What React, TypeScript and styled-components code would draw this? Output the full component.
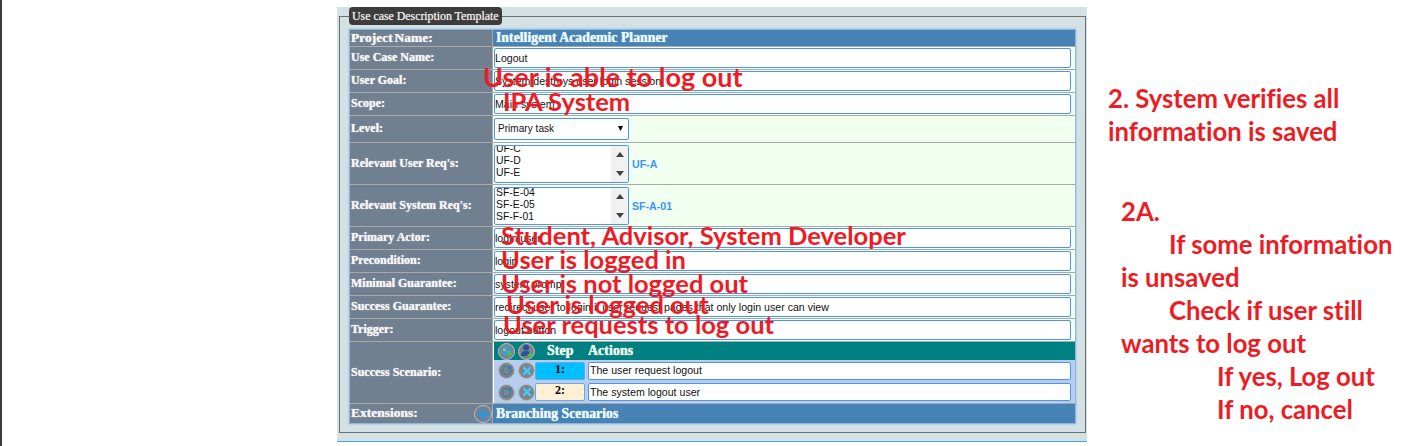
import React from 'react';
import styled, { createGlobalStyle } from 'styled-components';
import { Plus, X, RotateCw } from 'lucide-react';

const GlobalStyle = createGlobalStyle`
  html, body {
    margin: 0;
    padding: 0;
    background: #fff;
  }
`;

const Page = styled.div`
  display: flex;
  width: 1415px;
  height: 446px;
  overflow: hidden;
  background: #fff;
`;

const LeftEdge = styled.div`
  width: 2px;
  flex-shrink: 0;
  background: #3a3a3a;
  margin-right: 335px;
`;

const Panel = styled.div`
  width: 750px;
  height: 435px;
  box-sizing: border-box;
  flex-shrink: 0;
  margin-top: 7px;
  padding: 0 1px 0 2px;
  background: #d3e1e4;
  border-bottom: 1px solid #4aa3d8;
`;

const Fieldset = styled.fieldset`
  margin: 0;
  padding: 0 9px 9px 9px;
  height: 426px;
  box-sizing: border-box;
  border: 1px solid #6a6f70;
  min-width: 0;
`;

const Legend = styled.legend`
  padding: 0 3px;
  height: 18px;
  line-height: 18px;
  box-sizing: border-box;
  background: #3c3c3c;
  border-radius: 4px;
  color: #f0f0f0;
  font: 12px/18px 'Liberation Serif', serif;
  letter-spacing: -0.07px;
  text-shadow: 0 0 1px #bbb;
`;

const TableWrap = styled.div`
  position: relative;
  margin-top: 4px;
  width: 727px;
  box-sizing: border-box;
  border: 1px solid #8fb6e0;
  box-shadow: 0 0 2px #8fb6e0;
  background: #a9a9a9;
  display: flex;
  flex-direction: column;
  gap: 1px;
`;

const Row = styled.div<{ $h: number }>`
  display: flex;
  height: ${p => p.$h}px;
  gap: 1px;
`;

const Label = styled.div<{ $big?: boolean; $lift?: boolean }>`
  position: relative;
  width: 142px;
  flex-shrink: 0;
  box-sizing: border-box;
  padding-left: 1px;
  padding-bottom: ${p => (p.$lift ? 2 : 0)}px;
  display: flex;
  align-items: center;
  background: #708090;
  color: #f5f5f5;
  font: bold ${p => (p.$big ? 13.5 : 12)}px 'Liberation Serif', serif;
  word-spacing: ${p => (p.$big ? -1.5 : 0)}px;
  text-shadow: 0 0 1px #fff;
  white-space: nowrap;
`;

const Value = styled.div`
  flex: 1;
  min-width: 0;
  display: flex;
  align-items: center;
  gap: 3px;
  padding: 0 4px 0 1px;
  background: #f0fff0;
`;

const Banner = styled.div`
  flex: 1;
  display: flex;
  align-items: center;
  padding-left: 3px;
  background: #4682b4;
  color: #e8fbff;
  font: bold 13.8px 'Liberation Serif', serif;
  text-shadow: 0 0 1px #fff;
`;

const TextBox = styled.input`
  flex: 1;
  min-width: 0;
  height: 20px;
  box-sizing: border-box;
  padding: 0 0 1px 0;
  background: #fff;
  border: 1px solid #4d94f0;
  border-radius: 2px;
  outline: none;
  color: #111;
  font: 10.6px 'Liberation Sans', sans-serif;
`;

const SelectBox = styled.div`
  width: 135px;
  height: 22px;
  box-sizing: border-box;
  padding: 0 5px 1px 3px;
  display: flex;
  align-items: center;
  justify-content: space-between;
  background: #fff;
  border: 1px solid #4d94f0;
  border-radius: 2px;
  color: #111;
  font: 10px 'Liberation Sans', sans-serif;
  letter-spacing: 0.05px;
`;

const ListBox = styled.div`
  width: 135px;
  height: 38px;
  box-sizing: border-box;
  display: flex;
  overflow: hidden;
  background: #fff;
  border: 1px solid #4d94f0;
  border-radius: 2px;
`;

const Options = styled.div<{ $shift: number }>`
  flex: 1;
  margin-top: ${p => p.$shift}px;
  padding-left: 1px;
  color: #111;
  font: 10.4px/12.4px 'Liberation Sans', sans-serif;
`;

const ScrollBar = styled.div`
  width: 17px;
  flex-shrink: 0;
  display: flex;
  flex-direction: column;
  align-items: center;
  justify-content: space-between;
  padding: 6px 0;
  box-sizing: border-box;
  background: #f1f1f1;
`;

const Picked = styled.span`
  color: #3d94f6;
  font: bold 10.6px 'Liberation Sans', sans-serif;
`;

const ScenarioCell = styled.div`
  flex: 1;
  min-width: 0;
  display: flex;
  flex-direction: column;
  padding: 0 4px 0 1px;
  background: #f0fff0;
`;

const ScenarioHead = styled.div`
  display: flex;
  align-items: center;
  height: 18px;
  padding-left: 4px;
  gap: 3px;
  margin-right: -4px;
  background: #008080;
  color: #f0fff0;
  font: bold 14px 'Liberation Serif', serif;
  text-shadow: 0 0 1px #fff;
`;

const HeadStep = styled.span`
  margin-left: 9px;
  width: 38px;
`;

const ScenarioBody = styled.div`
  flex: 1;
  display: flex;
  flex-direction: column;
  margin-right: -4px;
  padding: 0 4px;
  background: #b7cdf0;
`;

const StepRow = styled.div`
  display: flex;
  align-items: center;
  flex: 1;
  gap: 3px;
`;

const StepBox = styled.div<{ $active?: boolean }>`
  width: 50px;
  height: 18px;
  margin-left: -3px;
  box-sizing: border-box;
  text-align: center;
  background: ${p => (p.$active ? '#00bfff' : '#ffefd5')};
  border: 1px solid #6ea6ee;
  border-radius: 2px;
  color: #000;
  font: bold 12px/12px 'Liberation Serif', serif;
`;

const ActionBox = styled(TextBox)`
  height: 18px;
  padding: 0 0 1px 1px;
`;

const RoundButton = styled.span`
  width: 17px;
  height: 17px;
  flex-shrink: 0;
  box-sizing: border-box;
  display: inline-flex;
  align-items: center;
  justify-content: center;
  background: #808488;
  border: 1.5px solid #bdbdbd;
  border-radius: 50%;
`;

const AddBranch = styled(RoundButton)`
  position: absolute;
  right: 0;
  top: 1px;
  width: 18px;
  height: 18px;
  background: #6f8296;
`;

const Overlay = styled.div<{ $x: number; $y: number; $size: number }>`
  position: absolute;
  left: ${p => p.$x}px;
  top: ${p => p.$y}px;
  color: #ed1c24;
  font: bold ${p => p.$size}px/30px Lato, sans-serif;
  font-variant-ligatures: none;
  white-space: nowrap;
  pointer-events: none;
`;

const Notes = styled.div`
  margin-left: 21px;
  padding-top: 82px;
  color: #ed1c24;
  font: bold 25.7px/33px Lato, sans-serif;
  font-variant-ligatures: none;
  white-space: nowrap;
`;

const Note = styled.div<{ $indent?: number; $gap?: number }>`
  margin-left: ${p => p.$indent ?? 0}px;
  margin-top: ${p => p.$gap ?? 0}px;
`;

const Arrow = ({ up, size = 8, color = '#444' }: { up?: boolean; size?: number; color?: string }) => (
  <svg width={size} height={5} viewBox="0 0 8 5" preserveAspectRatio="none">
    <path d={up ? 'M4 0L8 5H0Z' : 'M0 0H8L4 5Z'} fill={color} />
  </svg>
);

const GlobeAdd = () => (
  <svg width={13} height={13} viewBox="0 0 13 13">
    <circle cx="6" cy="6" r="5" fill="#3f9bd8" />
    <path d="M3 3.5c2-1 3 0 3 1.5S4 7 3 6zM7 7c2-1 3 0 3 1" fill="#8cc06a" />
    <path d="M9.5 6.5v5M7 9h5" stroke="#43c243" strokeWidth="2" />
  </svg>
);

const UserAdd = () => (
  <svg width={13} height={14} viewBox="0 0 13 14">
    <circle cx="6" cy="3.5" r="3" fill="#24509c" />
    <path d="M1 12c0-4 2-5 5-5s5 1 5 5z" fill="#24509c" />
    <path d="M10 8.5v5M7.5 11h5" stroke="#43c243" strokeWidth="2" />
  </svg>
);

const rows = [
  { label: 'Use Case Name:', value: 'Logout' },
  { label: 'User Goal:', value: 'System destroys user login session' },
  { label: 'Scope:', value: 'Main system' },
];

const lowerRows = [
  { label: 'Primary Actor:', value: 'login user' },
  { label: 'Precondition:', value: 'login' },
  { label: 'Minimal Guarantee:', value: 'system prompt' },
  {
    label: 'Success Guarantee:',
    value: 'redirect user to login if user request pages that only login user can view',
  },
  { label: 'Trigger:', value: 'logout button' },
];

const steps = [
  { n: '1:', text: 'The user request logout', active: true },
  { n: '2:', text: 'The system logout user', active: false },
];

const overlays = [
  { x: 133, y: 32, size: 27, text: 'User is able to log out' },
  { x: 153, y: 56, size: 25.5, text: 'IPA System' },
  { x: 151, y: 190, size: 25.5, text: 'Student, Advisor, System Developer' },
  { x: 151, y: 214, size: 25.5, text: 'User is logged in' },
  { x: 151, y: 238, size: 25.5, text: 'User is not logged out' },
  { x: 156, y: 259, size: 25.5, text: 'User is logged out' },
  { x: 153, y: 279, size: 25.5, text: 'User requests to log out' },
];

const Field = ({ label, value }: { label: string; value: string }) => (
  <Row $h={22}>
    <Label $lift>{label}</Label>
    <Value>
      <TextBox readOnly value={value} />
    </Value>
  </Row>
);

const App: React.FC = () => {
  return (
    <Page>
      <GlobalStyle />
      <LeftEdge />
      <Panel>
        <Fieldset>
          <Legend>Use case Description Template</Legend>
          <TableWrap>
            <Row $h={16}>
              <Label $big>Project Name:</Label>
              <Banner>Intelligent Academic Planner</Banner>
            </Row>
            {rows.map(r => (
              <Field key={r.label} {...r} />
            ))}
            <Row $h={26}>
              <Label $lift>Level:</Label>
              <Value>
                <SelectBox>
                  Primary task
                  <Arrow size={5} color="#000" />
                </SelectBox>
              </Value>
            </Row>
            <Row $h={41}>
              <Label>Relevant User Req's:</Label>
              <Value>
                <ListBox>
                  <Options $shift={-3}>
                    <div>UF-C</div>
                    <div>UF-D</div>
                    <div>UF-E</div>
                  </Options>
                  <ScrollBar>
                    <Arrow up />
                    <Arrow />
                  </ScrollBar>
                </ListBox>
                <Picked>UF-A</Picked>
              </Value>
            </Row>
            <Row $h={41}>
              <Label>Relevant System Req's:</Label>
              <Value>
                <ListBox>
                  <Options $shift={-1}>
                    <div>SF-E-04</div>
                    <div>SF-E-05</div>
                    <div>SF-F-01</div>
                  </Options>
                  <ScrollBar>
                    <Arrow up />
                    <Arrow />
                  </ScrollBar>
                </ListBox>
                <Picked>SF-A-01</Picked>
              </Value>
            </Row>
            {lowerRows.map(r => (
              <Field key={r.label} {...r} />
            ))}
            <Row $h={61}>
              <Label>Success Scenario:</Label>
              <ScenarioCell>
                <ScenarioHead>
                  <RoundButton>
                    <GlobeAdd />
                  </RoundButton>
                  <RoundButton>
                    <UserAdd />
                  </RoundButton>
                  <HeadStep>Step</HeadStep>
                  <span>Actions</span>
                </ScenarioHead>
                <ScenarioBody>
                  {steps.map(s => (
                    <StepRow key={s.n}>
                      <RoundButton>
                        <RotateCw size={11} color="#2f7fb8" strokeWidth={3} />
                      </RoundButton>
                      <RoundButton>
                        <X size={12} color="#45c4f7" strokeWidth={5} />
                      </RoundButton>
                      <StepBox $active={s.active}>{s.n}</StepBox>
                      <ActionBox readOnly value={s.text} />
                    </StepRow>
                  ))}
                </ScenarioBody>
              </ScenarioCell>
            </Row>
            <Row $h={19}>
              <Label $big $lift>
                Extensions:
                <AddBranch>
                  <Plus size={15} color="#1e9bf0" strokeWidth={3.5} />
                </AddBranch>
              </Label>
              <Banner>Branching Scenarios</Banner>
            </Row>
            {overlays.map(o => (
              <Overlay key={o.text} $x={o.x} $y={o.y} $size={o.size}>
                {o.text}
              </Overlay>
            ))}
          </TableWrap>
        </Fieldset>
      </Panel>
      <Notes>
        <Note>2. System verifies all</Note>
        <Note>information is saved</Note>
        <Note $indent={13} $gap={47}>2A.</Note>
        <Note $indent={61}>If some information</Note>
        <Note $indent={13}>is unsaved</Note>
        <Note $indent={61}>Check if user still</Note>
        <Note $indent={13}>wants to log out</Note>
        <Note $indent={109}>If yes, Log out</Note>
        <Note $indent={109}>If no, cancel</Note>
      </Notes>
    </Page>
  );
};

export default App;
